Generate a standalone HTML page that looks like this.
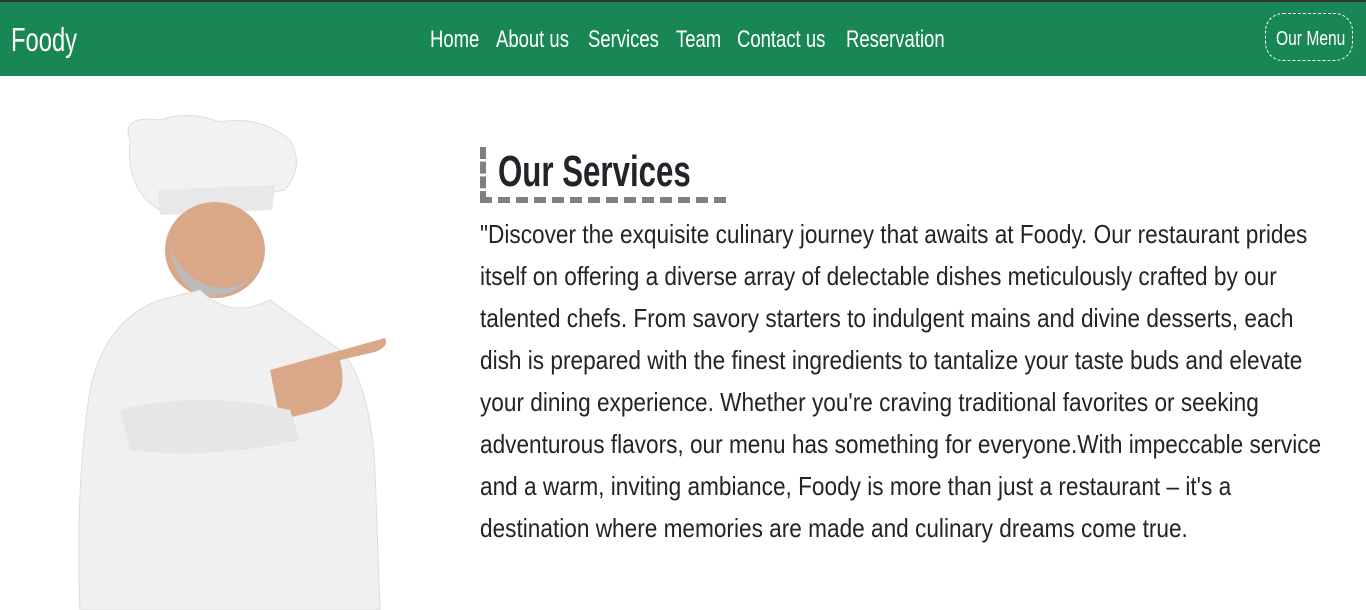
<!DOCTYPE html>
<html><head><style>
*{margin:0;padding:0;box-sizing:border-box}
body{width:1366px;height:610px;overflow:hidden;background:#fff;font-family:"Liberation Sans",sans-serif;color:#212529}
.s{display:inline-block;white-space:nowrap;transform-origin:left center;transform:scaleX(.78)}
.top{height:2px;background:#333}
nav{height:74px;background:#198754;position:relative;color:#fff}
.logo{position:absolute;left:11px;top:19px;font-size:33px;transform:scaleX(.72)}
.n{position:absolute;top:24px;font-size:24px;transform:scaleX(.77)}
.btn{position:absolute;left:1265px;top:11px;width:88px;height:48px;border:1px dashed #fff;border-radius:18px;}
.btn span{position:absolute;left:10px;top:14px;font-size:20px}
h2{position:absolute;left:480px;top:147px;width:246px;height:56px;border-left:6px dashed #808080;border-bottom:6px dashed #808080;}
h2 span.s{position:absolute;left:12px;top:0;font-size:44px;font-weight:bold;line-height:50px;transform:scaleX(.71)}
.p{position:absolute;left:480px;top:213px;font-size:26px;line-height:42px}
.p div{white-space:nowrap;transform-origin:left center;transform:scaleX(.87)}
svg{position:absolute;left:60px;top:110px}
</style></head><body>
<div class="top"></div>
<nav><div class="logo s">Foody</div>
<div class="n s" style="left:430px">Home</div>
<div class="n s" style="left:496px">About us</div>
<div class="n s" style="left:588px">Services</div>
<div class="n s" style="left:676px">Team</div>
<div class="n s" style="left:737px">Contact us</div>
<div class="n s" style="left:846px">Reservation</div>
<div class="btn"><span class="s">Our Menu</span></div></nav>
<svg width="340" height="500" viewBox="0 0 340 500">
<path d="M70 30 Q60 5 100 10 Q130 0 160 12 Q200 5 230 30 Q245 55 225 80 L100 100 Q65 80 70 30Z" fill="#f2f2f2" stroke="#ddd"/>
<path d="M98 80 L215 75 L212 100 L100 105Z" fill="#e8e8e8"/>
<ellipse cx="155" cy="140" rx="50" ry="48" fill="#d9a889"/>
<path d="M110 140 Q120 190 160 185 Q190 180 200 150 Q195 175 165 178 Q130 178 110 140Z" fill="#bbb"/>
<path d="M100 190 L140 180 Q170 210 210 190 L280 240 Q310 270 315 360 L320 500 L20 500 Q15 380 30 280 Q45 210 100 190Z" fill="#f0f0f0" stroke="#ddd"/>
<path d="M210 260 L325 228 Q330 236 315 242 L280 250 Q290 290 260 300 L220 310Z" fill="#d9a889"/>
<path d="M60 300 Q140 280 230 300 L240 330 Q150 350 70 340Z" fill="#e6e6e6"/>
</svg>
<h2><span class="s">Our Services</span></h2>
<div class="p">
<div>"Discover the exquisite culinary journey that awaits at Foody. Our restaurant prides</div>
<div>itself on offering a diverse array of delectable dishes meticulously crafted by our</div>
<div>talented chefs. From savory starters to indulgent mains and divine desserts, each</div>
<div>dish is prepared with the finest ingredients to tantalize your taste buds and elevate</div>
<div>your dining experience. Whether you're craving traditional favorites or seeking</div>
<div>adventurous flavors, our menu has something for everyone.With impeccable service</div>
<div>and a warm, inviting ambiance, Foody is more than just a restaurant – it's a</div>
<div>destination where memories are made and culinary dreams come true.</div>
</div>
</body></html>
